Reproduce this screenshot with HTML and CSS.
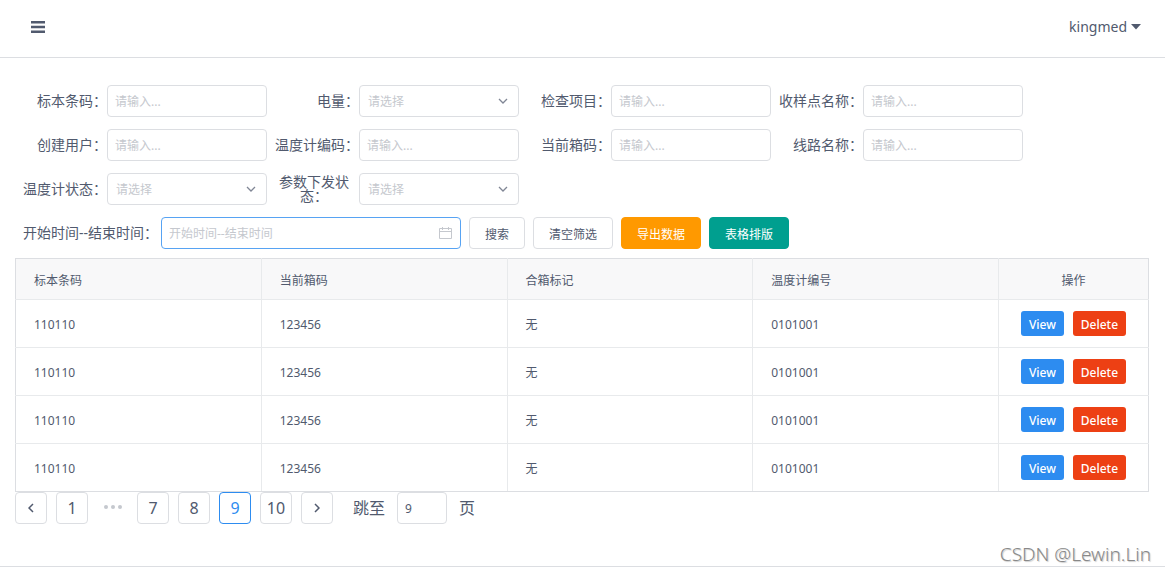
FILE: index.html
```html
<!DOCTYPE html>
<html lang="zh-CN">
<head>
<meta charset="utf-8">
<title>标本温度管理</title>
<link rel="stylesheet" href="styles.css">
</head>
<body>
<svg class="defs" width="0" height="0" aria-hidden="true">
  <symbol id="chevron" viewBox="0 0 10 10"><path d="M1 3l4 4 4-4" fill="none" stroke="currentColor" stroke-width="1.3"/></symbol>
</svg>
<header class="topbar">
  <button class="menu" type="button" aria-label="菜单">
    <svg width="14" height="12" viewBox="0 0 14 12"><path d="M0 0h14v2.500H0zM0 4.700h14v2.500H0zM0 9.500h14v2.500H0z" fill="currentColor"/></svg>
  </button>
  <button class="user" type="button">kingmed
    <svg width="10" height="6" viewBox="0 0 10 6"><path d="M0 0h10L5 5.500z" fill="currentColor"/></svg>
  </button>
</header>
<main class="content">
  <form class="filters">
    <div class="field"><label for="f1">标本条码：</label><input class="control" id="f1" type="text" placeholder="请输入..."></div>
    <div class="field"><label for="f2">电量：</label><span class="select"><select class="control" id="f2"><option>请选择</option></select><svg class="arrow"><use href="#chevron"/></svg></span></div>
    <div class="field"><label for="f3">检查项目：</label><input class="control" id="f3" type="text" placeholder="请输入..."></div>
    <div class="field"><label for="f4">收样点名称：</label><input class="control" id="f4" type="text" placeholder="请输入..."></div>
    <div class="field"><label for="f5">创建用户：</label><input class="control" id="f5" type="text" placeholder="请输入..."></div>
    <div class="field"><label for="f6">温度计编码：</label><input class="control" id="f6" type="text" placeholder="请输入..."></div>
    <div class="field"><label for="f7">当前箱码：</label><input class="control" id="f7" type="text" placeholder="请输入..."></div>
    <div class="field"><label for="f8">线路名称：</label><input class="control" id="f8" type="text" placeholder="请输入..."></div>
    <div class="field"><label for="f9">温度计状态：</label><span class="select"><select class="control" id="f9"><option>请选择</option></select><svg class="arrow"><use href="#chevron"/></svg></span></div>
    <div class="field"><label class="wrapped" for="f10">参数下发状态：</label><span class="select"><select class="control" id="f10"><option>请选择</option></select><svg class="arrow"><use href="#chevron"/></svg></span></div>
  </form>
  <div class="actions">
    <div class="range">
      <label for="f11">开始时间--结束时间：</label>
      <span class="date">
        <input class="control active" id="f11" type="text" placeholder="开始时间--结束时间">
        <svg class="calendar" width="13" height="12" viewBox="0 0 13 12"><path d="M.5 1.500h12v10H.5zM.5 4.500h12M3.500 0v3M9.500 0v3" fill="none" stroke="currentColor"/></svg>
      </span>
    </div>
    <button class="btn" type="button">搜索</button>
    <button class="btn" type="button">清空筛选</button>
    <button class="btn warning" type="button">导出数据</button>
    <button class="btn teal" type="button">表格排版</button>
  </div>
  <table class="grid">
    <thead><tr><th>标本条码</th><th>当前箱码</th><th>合箱标记</th><th>温度计编号</th><th class="ops">操作</th></tr></thead>
    <tbody>
      <tr><td>110110</td><td>123456</td><td>无</td><td>0101001</td><td class="ops"><div class="pair"><button class="small view" type="button">View</button><button class="small delete" type="button">Delete</button></div></td></tr>
      <tr><td>110110</td><td>123456</td><td>无</td><td>0101001</td><td class="ops"><div class="pair"><button class="small view" type="button">View</button><button class="small delete" type="button">Delete</button></div></td></tr>
      <tr><td>110110</td><td>123456</td><td>无</td><td>0101001</td><td class="ops"><div class="pair"><button class="small view" type="button">View</button><button class="small delete" type="button">Delete</button></div></td></tr>
      <tr><td>110110</td><td>123456</td><td>无</td><td>0101001</td><td class="ops"><div class="pair"><button class="small view" type="button">View</button><button class="small delete" type="button">Delete</button></div></td></tr>
    </tbody>
  </table>
  <nav class="pager" aria-label="分页">
    <button class="page" type="button" aria-label="上一页"><svg width="6" height="10" viewBox="0 0 6 10"><path d="M5 1L1 5l4 4" fill="none" stroke="currentColor" stroke-width="1.500"/></svg></button>
    <button class="page" type="button">1</button>
    <span class="dots"><svg width="18" height="4" viewBox="0 0 18 4" fill="currentColor"><circle cx="2" cy="2" r="2"/><circle cx="9" cy="2" r="2"/><circle cx="16" cy="2" r="2"/></svg></span>
    <button class="page" type="button">7</button>
    <button class="page" type="button">8</button>
    <button class="page current" type="button" aria-current="page">9</button>
    <button class="page" type="button">10</button>
    <button class="page" type="button" aria-label="下一页"><svg width="6" height="10" viewBox="0 0 6 10"><path d="M1 1l4 4-4 4" fill="none" stroke="currentColor" stroke-width="1.500"/></svg></button>
    <span class="jump"><label for="jump">跳至</label><input class="control" id="jump" type="text" value="9"><span>页</span></span>
  </nav>
</main>
<div class="watermark">CSDN @Lewin.Lin</div>
</body>
</html>
```
FILE: styles.css
```css
* { box-sizing: border-box; }
body {
  margin: 0;
  color: #515a6e;
  background: #fff;
  font: 14px/14px "Noto Sans", "Noto Sans CJK SC", sans-serif;
}
button, input, select { font-family: inherit; color: inherit; margin: 0; }
button { padding: 0; border: 0; background: none; cursor: pointer; }
svg { display: block; flex: none; }
.defs { position: absolute; }

.topbar {
  display: flex;
  align-items: center;
  justify-content: space-between;
  height: 58px;
  padding: 0 24px 4px 31px;
  border-bottom: 1px solid #dcdee2;
}
.user { display: flex; align-items: center; gap: 4px; font-size: 14px; line-height: 20px; }

.content { padding: 27px 16px 42px 15px; border-bottom: 1px solid #dcdee2; }
.filters { display: flex; flex-wrap: wrap; gap: 12px 8px; padding-left: 8px; }
.field { display: flex; align-items: center; width: 244px; }
.field label { width: 84px; text-align: right; }
.field .wrapped { padding-right: 6px; text-align: center; }
.field .control { width: 160px; }
.control {
  height: 32px;
  padding: 1px 7px 0;
  border: 1px solid #dcdee2;
  border-radius: 4px;
  background: #fff;
  font-size: 12px;
  line-height: 18px;
  outline: none;
}
.control::placeholder { color: #c5c8ce; opacity: 1; }
.select, .date { position: relative; display: block; }
select.control { display: block; padding: 2px 24px 0 8px; appearance: none; color: #c5c8ce; }
.arrow { position: absolute; top: 11px; right: 11px; width: 10px; height: 10px; color: #808695; pointer-events: none; }

.actions { display: flex; flex-wrap: wrap; gap: 8px; padding: 12px 0 9px 8px; }
.range { display: flex; align-items: center; }
.range label { width: 138px; white-space: nowrap; }
.date .control { display: block; width: 300px; padding-right: 32px; }
.control.active { border-color: #57a3f3; }
.calendar { position: absolute; top: 10px; right: 9px; color: #c5c8ce; }
.btn {
  height: 32px;
  padding: 3px 15px 0;
  border: 1px solid #dcdee2;
  border-radius: 4px;
  font-size: 12px;
  line-height: 18px;
}
.warning { border-color: #f90; background: #f90; color: #fff; }
.teal { border-color: #009f8f; background: #009f8f; color: #fff; }

.grid {
  width: 100%;
  table-layout: fixed;
  border: 1px solid #dcdee2;
  border-collapse: collapse;
  font-size: 12px;
  line-height: 18px;
}
.grid th, .grid td { height: 48px; padding: 2px 18px 0; border: 1px solid #e8eaec; text-align: left; font-weight: 400; }
.grid th { height: 41px; padding-top: 4px; background: #f8f8f9; border-top-color: #dcdee2; }
.grid tr > :first-child { border-left-color: #dcdee2; }
.grid tr > :last-child { border-right-color: #dcdee2; }
.grid tr:last-child td { border-bottom-color: #dcdee2; }
.grid .ops { width: 150px; text-align: center; }
.grid td.ops { padding-top: 0; }
.pair { display: flex; justify-content: center; gap: 9px; }
.small { height: 25px; padding: 2px 8px 0; border-radius: 3px; color: #fff; font-size: 12px; font-weight: 500; line-height: 18px; white-space: nowrap; }
.view { background: #2d8cf0; }
.delete { background: #ed4014; }

.pager { display: flex; align-items: center; gap: 9px; font-size: 16px; line-height: 24px; }
.page { display: flex; align-items: center; justify-content: center; width: 32px; height: 32px; border: 1px solid #dcdee2; border-radius: 4px; background: #fff; font-size: 16px; line-height: 24px; }
.current { border-color: #2d8cf0; color: #2d8cf0; }
.dots { display: flex; justify-content: center; width: 31px; padding-bottom: 2px; color: #c5c8ce; }
.jump { display: flex; align-items: center; gap: 12px; margin-left: 11px; }
.jump .control { width: 50px; }

.watermark {
  position: absolute;
  right: 14px;
  top: 542px;
  color: #888;
  font-size: 19px;
  font-weight: 300;
  line-height: 24px;
  text-shadow: 1px 1px 1px #ccc;
}
```
